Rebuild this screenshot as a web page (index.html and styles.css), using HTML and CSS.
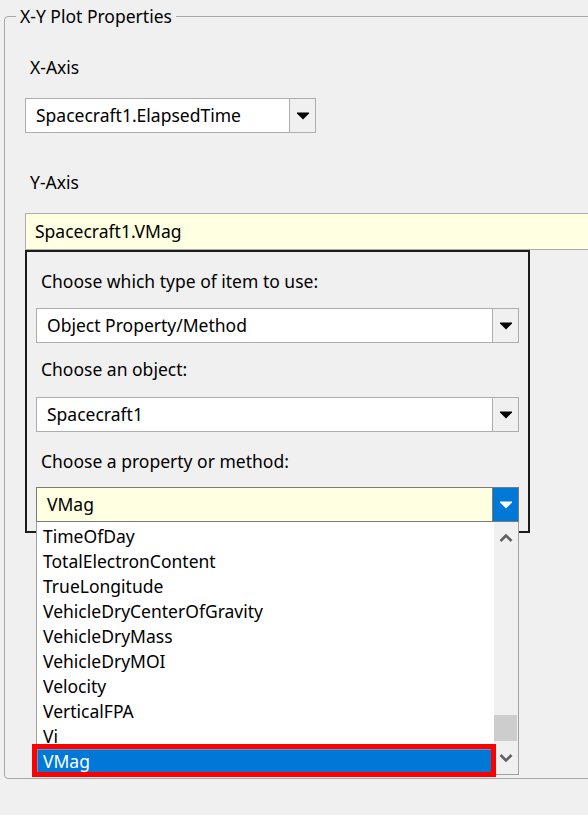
FILE: index.html
```html
<!DOCTYPE html>
<html lang="en">
<head>
<meta charset="utf-8">
<title>X-Y Plot Properties</title>
<link rel="stylesheet" href="styles.css">
</head>
<body>
<div class="window">
  <fieldset class="group">
    <legend class="group-title">X-Y Plot Properties</legend>
    <div class="label label-x">X-Axis</div>
    <div class="combo combo-x">
      <span class="combo-value">Spacecraft1.ElapsedTime</span>
      <span class="combo-btn"><svg width="12" height="8" viewBox="0 0 12 8"><polygon points="0,0.5 12,0.5 12,1.5 6,7.5 0,1.5" fill="#000"/></svg></span>
    </div>
    <div class="label label-y">Y-Axis</div>
    <div class="textbox">Spacecraft1.VMag</div>
    <div class="popup">
      <div class="plabel first">Choose which type of item to use:</div>
      <div class="combo pcombo c1">
        <span class="combo-value">Object Property/Method</span>
        <span class="combo-btn"><svg width="12" height="8" viewBox="0 0 12 8"><polygon points="0,0.5 12,0.5 12,1.5 6,7.5 0,1.5" fill="#000"/></svg></span>
      </div>
      <div class="plabel l2">Choose an object:</div>
      <div class="combo pcombo c2">
        <span class="combo-value">Spacecraft1</span>
        <span class="combo-btn"><svg width="12" height="8" viewBox="0 0 12 8"><polygon points="0,0.5 12,0.5 12,1.5 6,7.5 0,1.5" fill="#000"/></svg></span>
      </div>
      <div class="plabel l3">Choose a property or method:</div>
      <div class="combo pcombo active">
        <span class="combo-value">VMag</span>
        <span class="combo-btn"><svg width="12" height="8" viewBox="0 0 12 8"><polygon points="0,0.5 12,0.5 12,1.5 6,7.5 0,1.5" fill="#fff"/></svg></span>
      </div>
      <div class="listbox">
        <ul class="items">
          <li>TimeOfDay</li>
          <li>TotalElectronContent</li>
          <li>TrueLongitude</li>
          <li>VehicleDryCenterOfGravity</li>
          <li>VehicleDryMass</li>
          <li>VehicleDryMOI</li>
          <li>Velocity</li>
          <li>VerticalFPA</li>
          <li>Vi</li>
          <li class="selected">VMag</li>
        </ul>
        <div class="scrollbar">
          <span class="sb-arrow sb-up"><svg width="14" height="10" viewBox="0 0 14 10"><polyline points="1.5,8 7,2.5 12.5,8" fill="none" stroke="#606060" stroke-width="2.6"/></svg></span>
          <span class="sb-track"><span class="sb-thumb"></span></span>
          <span class="sb-arrow sb-down"><svg width="14" height="10" viewBox="0 0 14 10"><polyline points="1.5,2 7,7.5 12.5,2" fill="none" stroke="#606060" stroke-width="2.6"/></svg></span>
        </div>
        <div class="highlight"></div>
      </div>
    </div>
  </fieldset>
</div>
</body>
</html>
```
FILE: styles.css
```css
html, body {
  margin: 0;
  padding: 0;
  background: #f0f0f0;
  overflow: hidden;
}
body {
  width: 588px;
  height: 815px;
  font-family: "Noto Sans", "Open Sans", sans-serif;
  font-size: 17.5px;
  color: #000;
}
.window {
  width: 588px;
  height: 815px;
  box-sizing: border-box;
  overflow: hidden;
  padding: 6px 0 0 4px;
}
.group {
  margin: 0;
  padding: 0;
  width: 640px;
  height: 773px;
  box-sizing: border-box;
  border: 1px solid #a9a9a9;
  border-radius: 4px;
}
.group-title {
  margin-left: 11px;
  padding: 0 4px;
  line-height: 20px;
}
.label {
  line-height: 20px;
  margin-left: 25px;
}
.label-x { margin-top: 31px; }
.label-y { margin-top: 39px; }
.combo {
  display: flex;
  height: 35px;
  box-sizing: border-box;
  border: 1px solid #adadad;
  background: #fff;
}
.combo-x {
  width: 291px;
  margin: 21px 0 0 20px;
}
.combo-value {
  flex: 1;
  padding-left: 10px;
  line-height: 33px;
  white-space: nowrap;
}
.combo-btn {
  width: 25px;
  border-left: 1px solid #adadad;
  background: #f0f0f0;
  display: flex;
  align-items: center;
  justify-content: center;
}
.combo-btn svg { display: block; margin-left: 1px; }
.textbox {
  margin: 21px 0 0 20px;
  width: 620px;
  height: 37px;
  box-sizing: border-box;
  border: 1px solid #adadad;
  background: #ffffe1;
  padding-left: 9px;
  line-height: 35px;
  white-space: nowrap;
}
.popup {
  position: relative;
  margin-left: 20px;
  width: 505px;
  height: 283px;
  box-sizing: border-box;
  border: 2px solid #1c1c1c;
  padding: 19px 9px 0 9px;
}
.plabel {
  line-height: 20px;
  margin-left: 5px;
}
.plabel.l2 { margin-top: 16px; }
.plabel.l3 { margin-top: 19px; }
.pcombo.c1 { margin-top: 17px; }
.pcombo.c2 { margin-top: 18px; }
.pcombo.active {
  margin-top: 16px;
  border-color: #7a7a7a;
  background: #ffffe1;
}
.pcombo.active .combo-btn {
  background: #0078d7;
  border-left-color: #7a7a7a;
}
.listbox {
  position: absolute;
  left: 9px;
  top: 270px;
  width: 483px;
  height: 253px;
  box-sizing: border-box;
  border: 1px solid #a0a0a0;
  border-top: none;
  background: #fff;
  display: flex;
}
.items {
  list-style: none;
  margin: 0;
  padding: 2px 0 0 0;
  flex: 1;
}
.items li {
  height: 25px;
  line-height: 25px;
  padding-left: 6px;
  white-space: nowrap;
}
.items li.selected {
  background: #0078d7;
  color: #fff;
  box-shadow: inset 1px 1px 0 #4a9be0;
}
.scrollbar {
  width: 24px;
  background: #f0f0f0;
  display: flex;
  flex-direction: column;
}
.sb-arrow {
  display: flex;
  align-items: center;
  justify-content: center;
}
.sb-up { height: 32px; }
.sb-down { height: 33px; }
.sb-track {
  flex: 1;
  display: flex;
  flex-direction: column;
  justify-content: flex-end;
}
.sb-thumb {
  height: 26px;
  margin-right: 1px;
  background: #cdcdcd;
}
.highlight {
  position: absolute;
  left: -5px;
  top: 222px;
  width: 464px;
  height: 33px;
  box-sizing: border-box;
  border: 5px solid #ff0000;
}
```
